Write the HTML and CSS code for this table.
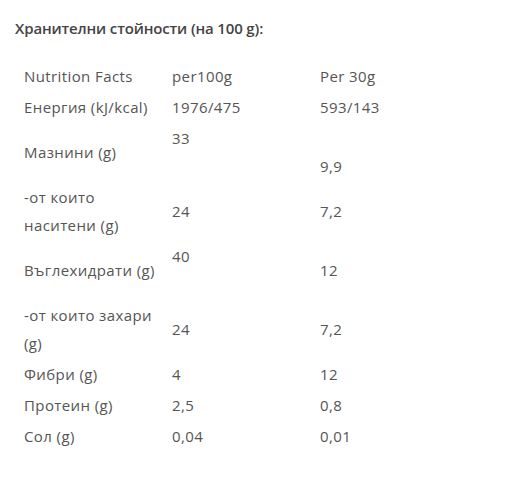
FILE: index.html
```html
<!DOCTYPE html>
<html lang="bg">
<head>
    <meta charset="UTF-8">
    <meta name="viewport" content="width=device-width, initial-scale=1.0">
    <title>Хранителни стойности</title>
    <link rel="stylesheet" href="styles.css">
</head>
<body>

    <div class="facts">
        <h3 class="facts-title">Хранителни стойности (на 100 g):</h3>

        <table class="facts-table">
            <tr>
                <td>Nutrition Facts</td>
                <td>per100g</td>
                <td>Per 30g</td>
            </tr>
            <tr>
                <td>Енергия (kJ/kcal)</td>
                <td>1976/475</td>
                <td>593/143</td>
            </tr>
            <tr>
                <td>Мазнини (g)</td>
                <td>33<br>&nbsp;</td>
                <td>&nbsp;<br>9,9</td>
            </tr>
            <tr>
                <td>-от които<br>наситени (g)</td>
                <td>24</td>
                <td>7,2</td>
            </tr>
            <tr>
                <td>Въглехидрати (g)</td>
                <td>40<br>&nbsp;</td>
                <td>12</td>
            </tr>
            <tr>
                <td>-от които захари<br>(g)</td>
                <td>24</td>
                <td>7,2</td>
            </tr>
            <tr>
                <td>Фибри (g)</td>
                <td>4</td>
                <td>12</td>
            </tr>
            <tr>
                <td>Протеин (g)</td>
                <td>2,5</td>
                <td>0,8</td>
            </tr>
            <tr>
                <td>Сол (g)</td>
                <td>0,04</td>
                <td>0,01</td>
            </tr>
        </table>
    </div>

</body>
</html>
```

FILE: styles.css
```css
body{
    margin: 0;
    background-color: #fff;
    font-family: "Open Sans", "Noto Sans", sans-serif;
    color: #555;
}
.facts{
    padding: 16px 15px;
}
.facts-title{
    margin: 0;
    font-size: 15px;
    line-height: 24px;
    font-weight: 600;
    letter-spacing: -0.15px;
    color: #444;
}
.facts-table{
    margin: 20px 0 0 9px;
    border-collapse: collapse;
    font-size: 15px;
    line-height: 28px;
    letter-spacing: 0.4px;
}
.facts-table td{
    padding: 2px 0 1px;
    vertical-align: middle;
    width: 148px;
}
```
